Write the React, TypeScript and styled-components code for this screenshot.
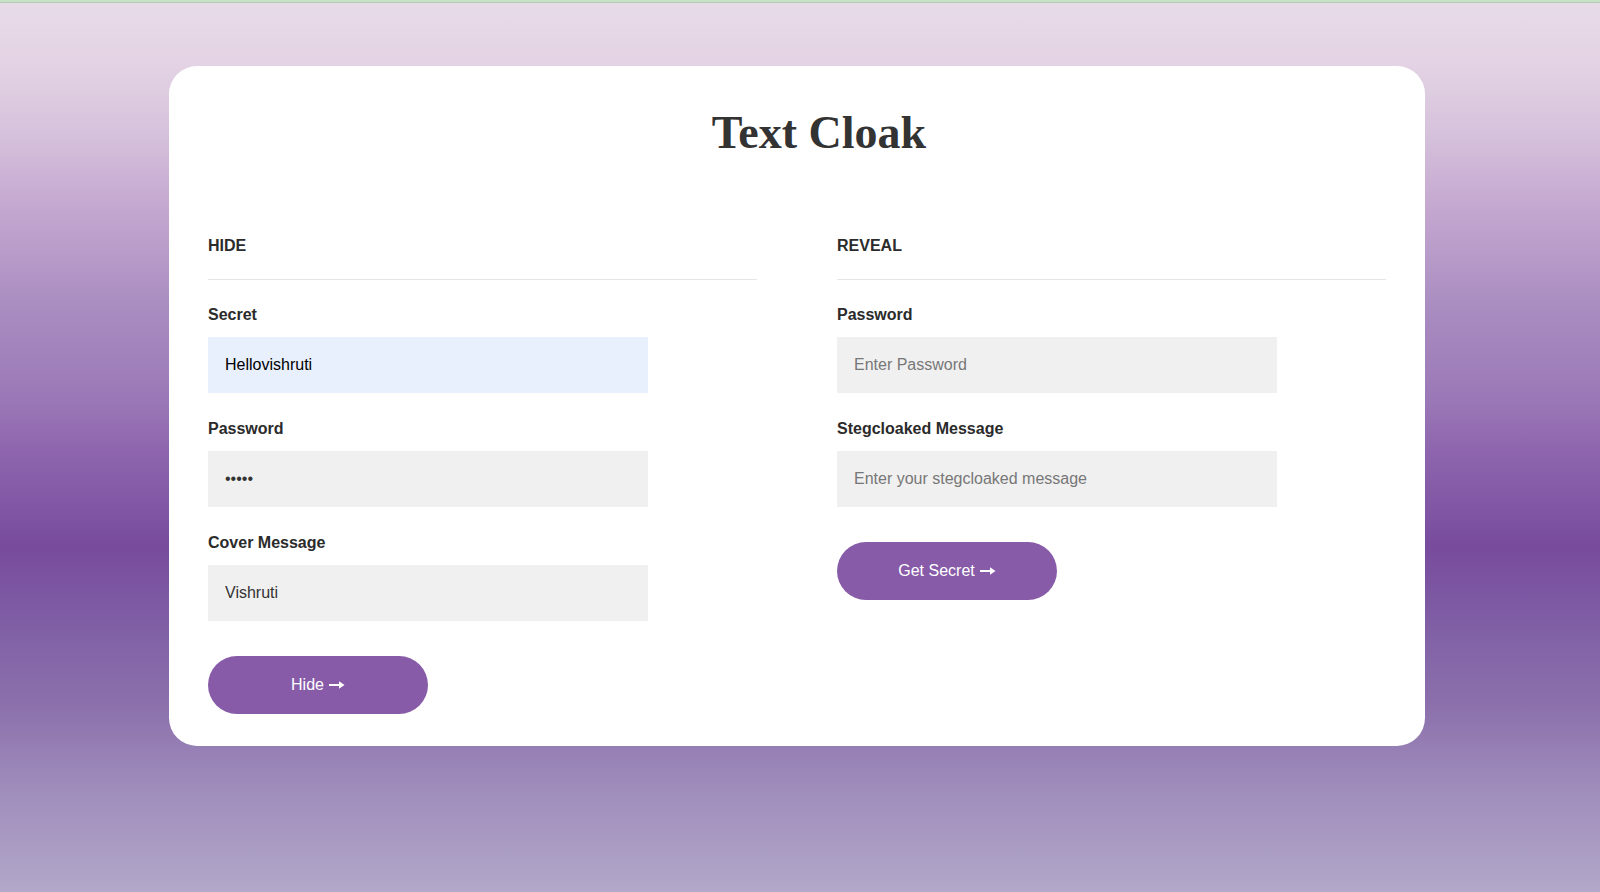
import React from "react";
import styled, { createGlobalStyle } from "styled-components";

const GlobalStyle = createGlobalStyle`
  html, body { margin: 0; padding: 0; }
  body { font-family: "Liberation Sans", Arial, Helvetica, sans-serif; }
  * { box-sizing: border-box; }
`;

const TopStrip = styled.div`
  height: 3px;
  background: #c7e2c6;
  border-bottom: 1px solid #b3cbb3;
`;

const Page = styled.div`
  min-height: 889px;
  padding: 63px 0 40px 169px;
  background: linear-gradient(
    180deg,
    #e8dbe8 0px,
    #e3d3e4 60px,
    #d6c2dc 130px,
    #c3a6cf 210px,
    #aa8ec1 300px,
    #9a77b6 400px,
    #8d64ad 450px,
    #8258a6 500px,
    #784b9d 543px,
    #7d59a3 600px,
    #8466a8 650px,
    #8b6fab 700px,
    #9c88b9 770px,
    #b2a8c9 889px
  );
`;

const Card = styled.div`
  width: 1256px;
  background: #ffffff;
  border-radius: 28px;
  padding: 41px 39px 32px 39px;
`;

const Title = styled.h1`
  margin: 0;
  padding-left: 44px;
  text-align: center;
  font-family: "Liberation Serif", Georgia, serif;
  font-weight: 700;
  font-size: 46px;
  line-height: 52px;
  color: #333333;
`;

const Columns = styled.div`
  display: grid;
  grid-template-columns: 549px 549px;
  column-gap: 80px;
  margin-top: 78px;
`;

const Column = styled.section`
  display: flex;
  flex-direction: column;
`;

const SectionTitle = styled.h2`
  margin: 0;
  font-size: 16px;
  font-weight: 700;
  line-height: 18px;
  color: #2b2b2b;
  padding-bottom: 24px;
  border-bottom: 1px solid #e6e6e6;
`;

const Field = styled.div<{ $first?: boolean }>`
  display: flex;
  flex-direction: column;
  margin-top: ${(p) => (p.$first ? "26px" : "27px")};
`;

const Label = styled.label`
  font-size: 16px;
  font-weight: 700;
  line-height: 18px;
  color: #2b2b2b;
  margin-bottom: 13px;
`;

const Input = styled.input<{ $filled?: boolean }>`
  width: 440px;
  height: 56px;
  border: none;
  outline: none;
  border-radius: 0;
  padding: 0 17px;
  font-family: "Liberation Sans", Arial, Helvetica, sans-serif;
  font-size: 16px;
  color: ${(p) => (p.$filled ? "#000000" : "#333333")};
  background: ${(p) => (p.$filled ? "#e8f0fe" : "#f0f0f0")};
  &::placeholder {
    color: #777777;
  }
`;

const Button = styled.button`
  margin-top: 35px;
  width: 220px;
  height: 58px;
  border: none;
  border-radius: 29px;
  background: #875ba8;
  color: #ffffff;
  font-family: "Liberation Sans", Arial, Helvetica, sans-serif;
  font-size: 16px;
  display: flex;
  align-items: center;
  justify-content: center;
  gap: 5px;
  cursor: pointer;
`;

const Arrow = () => (
  <svg width="16" height="10" viewBox="0 0 16 10" aria-hidden="true">
    <path d="M0 5 H12" stroke="#ffffff" strokeWidth="2" />
    <path d="M10 1.2 L15.5 5 L10 8.8 Z" fill="#ffffff" />
  </svg>
);

export default function App() {
  return (
    <>
      <GlobalStyle />
      <TopStrip />
      <Page>
        <Card>
          <Title>Text Cloak</Title>
          <Columns>
            <Column>
              <SectionTitle>HIDE</SectionTitle>
              <Field $first>
                <Label>Secret</Label>
                <Input $filled defaultValue="Hellovishruti" />
              </Field>
              <Field>
                <Label>Password</Label>
                <Input type="password" defaultValue="12345" />
              </Field>
              <Field>
                <Label>Cover Message</Label>
                <Input defaultValue="Vishruti" />
              </Field>
              <Button>
                Hide <Arrow />
              </Button>
            </Column>
            <Column>
              <SectionTitle>REVEAL</SectionTitle>
              <Field $first>
                <Label>Password</Label>
                <Input placeholder="Enter Password" />
              </Field>
              <Field>
                <Label>Stegcloaked Message</Label>
                <Input placeholder="Enter your stegcloaked message" />
              </Field>
              <Button>
                Get Secret <Arrow />
              </Button>
            </Column>
          </Columns>
        </Card>
      </Page>
    </>
  );
}
